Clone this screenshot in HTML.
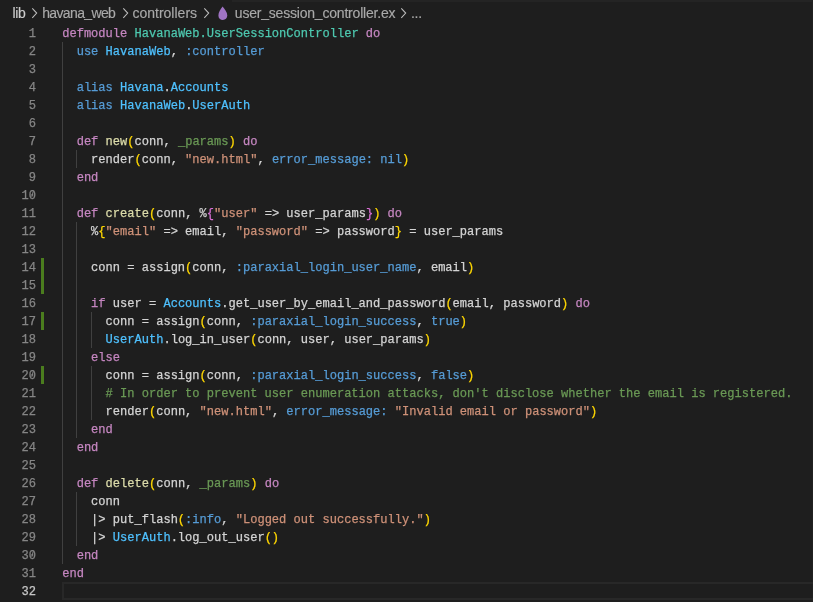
<!DOCTYPE html>
<html><head><meta charset="utf-8"><style>
html,body{margin:0;padding:0;}
body{width:813px;height:602px;background:#1e1e1e;overflow:hidden;position:relative;}
#root{position:absolute;left:0;top:0;width:813px;height:602px;will-change:transform;}
.bc{position:absolute;top:0;left:0;width:813px;height:24px;font-family:"Liberation Sans",sans-serif;font-size:14px;color:#a9a9a9;}
.bc span{position:absolute;top:5px;white-space:pre;line-height:16px;transform-origin:0 0;transform:scaleY(1.0);-webkit-text-stroke-width:0.15px;}
.ln{position:absolute;left:0;-webkit-text-stroke-width:0.25px;width:36px;text-align:right;font-family:"Liberation Mono",monospace;font-size:12.05px;line-height:18px;color:#6e7681;white-space:pre;}
.cl{position:absolute;left:62.2px;-webkit-text-stroke-width:0.25px;font-family:"Liberation Mono",monospace;font-size:12.05px;line-height:18px;color:#cccccc;white-space:pre;}
.k{color:#c586c0}.mg{color:#4ec9b0}.mb{color:#4fc1ff}.w{color:#d4d4d4}.f{color:#dcdcaa}.y{color:#ffd700}.p{color:#da70d6}.s{color:#ce9178}.b{color:#569cd6}.g{color:#6a9955}
.ig{position:absolute;width:1px;background:#404040;}
.us{font-style:normal;position:relative;top:-1.5px;}
.rstrip{position:absolute;left:812px;top:0;width:1px;height:602px;background:#212121;}
.z{position:relative;}
.z::after{content:'';position:absolute;left:3.6px;top:1.8px;width:1.1px;height:6.4px;background:currentColor;transform:rotate(15deg);}
.topstrip{position:absolute;left:232px;top:0;width:581px;height:2px;background:#242424;}
.gb{position:absolute;left:41px;width:3px;background:#4b7d1e;}
.cur{position:absolute;left:62px;right:0;height:14px;border:2px solid #282828;border-right:none;}
</style></head><body><div id="root">

<div class="topstrip"></div><div class="rstrip"></div>
<div class="cur" style="top:582px"></div>
<div class="ig" style="left:62.00px;top:42px;height:522px"></div>
<div class="ig" style="left:76.00px;top:150px;height:18px"></div>
<div class="ig" style="left:76.00px;top:222px;height:216px"></div>
<div class="ig" style="left:76.00px;top:492px;height:54px"></div>
<div class="ig" style="left:91.00px;top:312px;height:36px"></div>
<div class="ig" style="left:91.00px;top:366px;height:54px"></div>
<div class="gb" style="top:258px;height:36px"></div>
<div class="gb" style="top:312px;height:18px"></div>
<div class="gb" style="top:366px;height:18px"></div>
<div class="bc">
<span style="left:12.600000000000001px;letter-spacing:-0.4px;color:#cccccc">lib</span>
<span style="left:42.2px;letter-spacing:-0.633px;">havana<i class="us">_</i>web</span>
<span style="left:132.39999999999998px;letter-spacing:0.01px;">controllers</span>
<span style="left:234.8px;letter-spacing:-0.204px;">user<i class="us">_</i>session<i class="us">_</i>controller.ex</span>
<span style="left:411px;letter-spacing:-0.3px;">...</span>
<svg style="position:absolute;left:31.1px;top:7px" width="7" height="12" viewBox="0 0 7 12"><path d="M1.3 1.3 L5.7 6.1 L1.3 10.9" fill="none" stroke="#bdbdbd" stroke-width="1.05"/></svg>
<svg style="position:absolute;left:121.6px;top:7px" width="7" height="12" viewBox="0 0 7 12"><path d="M1.3 1.3 L5.7 6.1 L1.3 10.9" fill="none" stroke="#bdbdbd" stroke-width="1.05"/></svg>
<svg style="position:absolute;left:202.5px;top:7px" width="7" height="12" viewBox="0 0 7 12"><path d="M1.3 1.3 L5.7 6.1 L1.3 10.9" fill="none" stroke="#bdbdbd" stroke-width="1.05"/></svg>
<svg style="position:absolute;left:400.2px;top:7px" width="7" height="12" viewBox="0 0 7 12"><path d="M1.3 1.3 L5.7 6.1 L1.3 10.9" fill="none" stroke="#bdbdbd" stroke-width="1.05"/></svg>
<svg style="position:absolute;left:217px;top:6px" width="11" height="15" viewBox="0 0 11 15"><path d="M5.6 0.6 C7.6 3.3 10.3 6.2 10.3 9.6 C10.3 12.3 8.3 14 5.9 14 C3.3 14 1.4 12.2 1.4 9.4 C1.4 6.3 3.6 3.4 5.6 0.6 Z" fill="#a074c4"/></svg>
</div>
<div class="ln" style="top:25px;color:#858585">1</div>
<div class="cl" style="top:25px"><span class="k">defmodule</span><span class="w"> </span><span class="mg">HavanaWeb.UserSessionController</span><span class="w"> </span><span class="k">do</span></div>
<div class="ln" style="top:43px;color:#858585">2</div>
<div class="cl" style="top:43px"><span class="w">  </span><span class="b">use</span><span class="w"> </span><span class="mb">HavanaWeb</span><span class="w">, </span><span class="b">:controller</span></div>
<div class="ln" style="top:61px;color:#858585">3</div>
<div class="ln" style="top:79px;color:#858585">4</div>
<div class="cl" style="top:79px"><span class="w">  </span><span class="b">alias</span><span class="w"> </span><span class="mb">Havana</span><span class="w">.</span><span class="mb">Accounts</span></div>
<div class="ln" style="top:97px;color:#858585">5</div>
<div class="cl" style="top:97px"><span class="w">  </span><span class="b">alias</span><span class="w"> </span><span class="mb">HavanaWeb</span><span class="w">.</span><span class="mb">UserAuth</span></div>
<div class="ln" style="top:115px;color:#858585">6</div>
<div class="ln" style="top:133px;color:#858585">7</div>
<div class="cl" style="top:133px"><span class="w">  </span><span class="k">def</span><span class="w"> </span><span class="f">new</span><span class="y">(</span><span class="w">conn, </span><span class="g">_params</span><span class="y">)</span><span class="w"> </span><span class="k">do</span></div>
<div class="ln" style="top:151px;color:#858585">8</div>
<div class="cl" style="top:151px"><span class="w">    render</span><span class="y">(</span><span class="w">conn, </span><span class="s">&quot;new.html&quot;</span><span class="w">, </span><span class="b">error_message:</span><span class="w"> </span><span class="b">nil</span><span class="y">)</span></div>
<div class="ln" style="top:169px;color:#858585">9</div>
<div class="cl" style="top:169px"><span class="w">  </span><span class="k">end</span></div>
<div class="ln" style="top:187px;color:#858585">1<span class="z">0</span></div>
<div class="ln" style="top:205px;color:#858585">11</div>
<div class="cl" style="top:205px"><span class="w">  </span><span class="k">def</span><span class="w"> </span><span class="f">create</span><span class="y">(</span><span class="w">conn, %</span><span class="p">{</span><span class="s">&quot;user&quot;</span><span class="w"> =&gt; user_params</span><span class="p">}</span><span class="y">)</span><span class="w"> </span><span class="k">do</span></div>
<div class="ln" style="top:223px;color:#858585">12</div>
<div class="cl" style="top:223px"><span class="w">    %</span><span class="y">{</span><span class="s">&quot;email&quot;</span><span class="w"> =&gt; email, </span><span class="s">&quot;password&quot;</span><span class="w"> =&gt; password</span><span class="y">}</span><span class="w"> = user_params</span></div>
<div class="ln" style="top:241px;color:#858585">13</div>
<div class="ln" style="top:259px;color:#858585">14</div>
<div class="cl" style="top:259px"><span class="w">    conn = assign</span><span class="y">(</span><span class="w">conn, </span><span class="b">:paraxial_login_user_name</span><span class="w">, email</span><span class="y">)</span></div>
<div class="ln" style="top:277px;color:#858585">15</div>
<div class="ln" style="top:295px;color:#858585">16</div>
<div class="cl" style="top:295px"><span class="w">    </span><span class="k">if</span><span class="w"> user = </span><span class="mb">Accounts</span><span class="w">.get_user_by_email_and_password</span><span class="y">(</span><span class="w">email, password</span><span class="y">)</span><span class="w"> </span><span class="k">do</span></div>
<div class="ln" style="top:313px;color:#858585">17</div>
<div class="cl" style="top:313px"><span class="w">      conn = assign</span><span class="y">(</span><span class="w">conn, </span><span class="b">:paraxial_login_success</span><span class="w">, </span><span class="b">true</span><span class="y">)</span></div>
<div class="ln" style="top:331px;color:#858585">18</div>
<div class="cl" style="top:331px"><span class="w">      </span><span class="mb">UserAuth</span><span class="w">.log_in_user</span><span class="y">(</span><span class="w">conn, user, user_params</span><span class="y">)</span></div>
<div class="ln" style="top:349px;color:#858585">19</div>
<div class="cl" style="top:349px"><span class="w">    </span><span class="k">else</span></div>
<div class="ln" style="top:367px;color:#858585">2<span class="z">0</span></div>
<div class="cl" style="top:367px"><span class="w">      conn = assign</span><span class="y">(</span><span class="w">conn, </span><span class="b">:paraxial_login_success</span><span class="w">, </span><span class="b">false</span><span class="y">)</span></div>
<div class="ln" style="top:385px;color:#858585">21</div>
<div class="cl" style="top:385px"><span class="w">      </span><span class="g"># In order to prevent user enumeration attacks, don&#x27;t disclose whether the email is registered.</span></div>
<div class="ln" style="top:403px;color:#858585">22</div>
<div class="cl" style="top:403px"><span class="w">      render</span><span class="y">(</span><span class="w">conn, </span><span class="s">&quot;new.html&quot;</span><span class="w">, </span><span class="b">error_message:</span><span class="w"> </span><span class="s">&quot;Invalid email or password&quot;</span><span class="y">)</span></div>
<div class="ln" style="top:421px;color:#858585">23</div>
<div class="cl" style="top:421px"><span class="w">    </span><span class="k">end</span></div>
<div class="ln" style="top:439px;color:#858585">24</div>
<div class="cl" style="top:439px"><span class="w">  </span><span class="k">end</span></div>
<div class="ln" style="top:457px;color:#858585">25</div>
<div class="ln" style="top:475px;color:#858585">26</div>
<div class="cl" style="top:475px"><span class="w">  </span><span class="k">def</span><span class="w"> </span><span class="f">delete</span><span class="y">(</span><span class="w">conn, </span><span class="g">_params</span><span class="y">)</span><span class="w"> </span><span class="k">do</span></div>
<div class="ln" style="top:493px;color:#858585">27</div>
<div class="cl" style="top:493px"><span class="w">    conn</span></div>
<div class="ln" style="top:511px;color:#858585">28</div>
<div class="cl" style="top:511px"><span class="w">    |&gt; put_flash</span><span class="y">(</span><span class="b">:info</span><span class="w">, </span><span class="s">&quot;Logged out successfully.&quot;</span><span class="y">)</span></div>
<div class="ln" style="top:529px;color:#858585">29</div>
<div class="cl" style="top:529px"><span class="w">    |&gt; </span><span class="mb">UserAuth</span><span class="w">.log_out_user</span><span class="y">()</span></div>
<div class="ln" style="top:547px;color:#858585">3<span class="z">0</span></div>
<div class="cl" style="top:547px"><span class="w">  </span><span class="k">end</span></div>
<div class="ln" style="top:565px;color:#858585">31</div>
<div class="cl" style="top:565px"><span class="k">end</span></div>
<div class="ln" style="top:583px;color:#c6c6c6">32</div>
</div></body></html>
